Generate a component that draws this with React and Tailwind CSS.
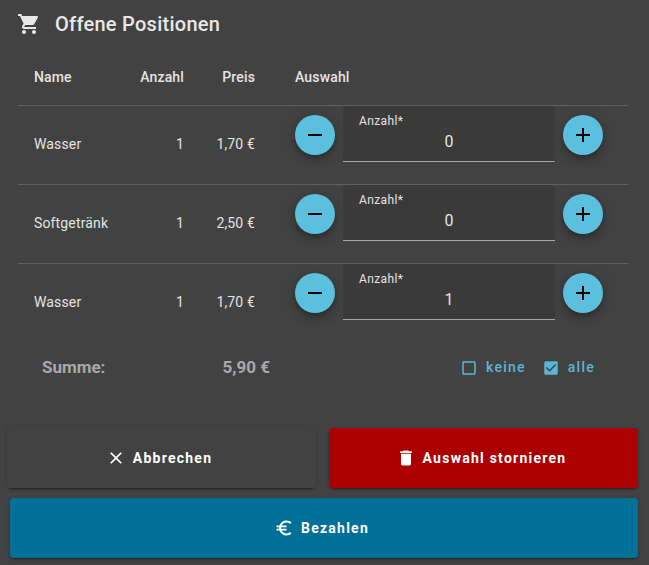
import React from 'react';

const ICONS = {
  cart: 'M7 18c-1.1 0-1.99.9-1.99 2S5.9 22 7 22s2-.9 2-2-.9-2-2-2zM1 2v2h2l3.6 7.59-1.35 2.45c-.16.28-.25.61-.25.96 0 1.1.9 2 2 2h12v-2H7.42c-.14 0-.25-.11-.25-.25l.03-.12.9-1.63h7.45c.75 0 1.41-.41 1.75-1.03l3.58-6.49c.08-.14.12-.31.12-.48 0-.55-.45-1-1-1H5.21l-.94-2H1zm16 16c-1.1 0-1.99.9-1.99 2s.89 2 1.99 2 2-.9 2-2-.9-2-2-2z',
  remove: 'M19 13H5v-2h14v2z',
  add: 'M19 13h-6v6h-2v-6H5v-2h6V5h2v6h6v2z',
  close: 'M19 6.41L17.59 5 12 10.59 6.41 5 5 6.41 10.59 12 5 17.59 6.41 19 12 13.41 17.59 19 19 17.59 13.41 12z',
  trash: 'M6 19c0 1.1.9 2 2 2h8c1.1 0 2-.9 2-2V7H6v12zM19 4h-3.5l-1-1h-5l-1 1H5v2h14V4z',
  euro: 'M15 18.5c-2.51 0-4.68-1.42-5.76-3.5H15v-2H8.58c-.05-.33-.08-.66-.08-1s.03-.67.08-1H15V9H9.24C10.32 6.92 12.5 5.5 15 5.5c1.61 0 3.09.59 4.23 1.57L21 5.3C19.41 3.87 17.3 3 15 3c-3.92 0-7.24 2.51-8.48 6H3v2h3.06c-.04.33-.06.66-.06 1 0 .34.02.67.06 1H3v2h3.52c1.24 3.49 4.56 6 8.48 6 2.31 0 4.41-.87 6-2.3l-1.78-1.77c-1.13.98-2.6 1.57-4.22 1.57z',
  box: 'M19 5v14H5V5h14m0-2H5c-1.1 0-2 .9-2 2v14c0 1.1.9 2 2 2h14c1.1 0 2-.9 2-2V5c0-1.1-.9-2-2-2z',
  boxChecked: 'M19 3H5c-1.11 0-2 .9-2 2v14c0 1.1.89 2 2 2h14c1.11 0 2-.9 2-2V5c0-1.1-.89-2-2-2zm-9 14l-5-5 1.41-1.41L10 14.17l7.59-7.59L19 8l-9 9z',
};

const Icon = ({ name, className }) => (
  <svg viewBox="0 0 24 24" fill="currentColor" className={className}>
    <path d={ICONS[name]} />
  </svg>
);

const RoundButton = ({ icon }) => (
  <button className="w-10 h-10 shrink-0 rounded-full bg-[#5bc0de] text-black flex items-center justify-center shadow-[0_3px_5px_-1px_rgba(0,0,0,0.2),0_6px_10px_0_rgba(0,0,0,0.14),0_1px_18px_0_rgba(0,0,0,0.12)]">
    <Icon name={icon} className="w-6 h-6" />
  </button>
);

const Row = ({ name, count, price, value }) => (
  <div className="flex h-[79px] border-t border-[#5f5f5f] text-[14px] tracking-[0.15px] text-[#e4e4e4]">
    <div className="w-[110px] pl-4 leading-[76px]">{name}</div>
    <div className="w-[56px] text-right leading-[76px]">{count}</div>
    <div className="w-[71px] text-right leading-[76px]">{price}</div>
    <div className="ml-10 flex items-start">
      <div className="mt-[9px]">
        <RoundButton icon="remove" />
      </div>
      <div className="ml-2 w-[212px] h-[56px] bg-[#3a3a3a] rounded-t border-b border-[#a5a5a5] relative">
        <div className="absolute left-4 top-[7px] text-[12px] leading-[16px] tracking-[0.4px] text-[#e4e4e4]">Anzahl*</div>
        <div className="pt-[26px] text-center text-[16px] leading-[20px] text-[#e4e4e4]">{value}</div>
      </div>
      <div className="ml-2 mt-[9px]">
        <RoundButton icon="add" />
      </div>
    </div>
  </div>
);

const Check = ({ icon, label, className }) => (
  <div className={`flex items-center text-[#5bb5d6] ${className}`}>
    <Icon name={icon} className="w-[18px] h-[18px]" />
    <span className="ml-2 mb-[2px] text-[14px] font-medium tracking-[1.25px]">{label}</span>
  </div>
);

const ActionButton = ({ icon, label, className }) => (
  <button className={`h-[60px] pr-[5px] rounded flex items-center justify-center text-white text-[14px] font-bold tracking-[1.25px] shadow-[0_3px_1px_-2px_rgba(0,0,0,0.2),0_2px_2px_0_rgba(0,0,0,0.14),0_1px_5px_0_rgba(0,0,0,0.12)] ${className}`}>
    <Icon name={icon} className="w-5 h-5 mr-[7px]" />
    {label}
  </button>
);

export default function App() {
  return (
    <div className="w-[649px] h-[565px] bg-[#424242] overflow-hidden antialiased font-['Roboto',sans-serif]">
      <div className="flex items-center h-[24px] mt-[12px] pl-[17px] text-[#e8e8e8]">
        <Icon name="cart" className="w-6 h-6" />
        <h2 className="ml-[14px] text-[20px] font-medium tracking-[0.27px]">Offene Positionen</h2>
      </div>

      <div className="mt-[15px] ml-[18px] w-[610px]">
        <div className="flex h-[54px] pb-[2px] items-center text-[14px] font-medium tracking-[0.15px] text-[#e4e4e4]">
          <div className="w-[110px] pl-4">Name</div>
          <div className="w-[56px] text-right">Anzahl</div>
          <div className="w-[71px] text-right">Preis</div>
          <div className="ml-10">Auswahl</div>
        </div>
        <Row name="Wasser" count="1" price="1,70 €" value="0" />
        <Row name="Softgetränk" count="1" price="2,50 €" value="0" />
        <Row name="Wasser" count="1" price="1,70 €" value="1" />
      </div>

      <div className="flex items-center h-[24px] mt-[14px] pl-[42px] text-[17px] font-bold text-[#a9a9a9]">
        <span className="w-[120px]">Summe:</span>
        <span className="w-[108px] text-right">5,90 €</span>
        <Check icon="box" label="keine" className="ml-[190px]" />
        <Check icon="boxChecked" label="alle" className="ml-[16px]" />
      </div>

      <div className="flex mt-[48px] ml-[7px] gap-[13px]">
        <ActionButton icon="close" label="Abbrechen" className="w-[309px] bg-[#424242]" />
        <ActionButton icon="trash" label="Auswahl stornieren" className="w-[309px] bg-[#ac0000]" />
      </div>
      <ActionButton icon="euro" label="Bezahlen" className="w-[628px] ml-[10px] mt-[10px] bg-[#007099]" />
    </div>
  );
}
